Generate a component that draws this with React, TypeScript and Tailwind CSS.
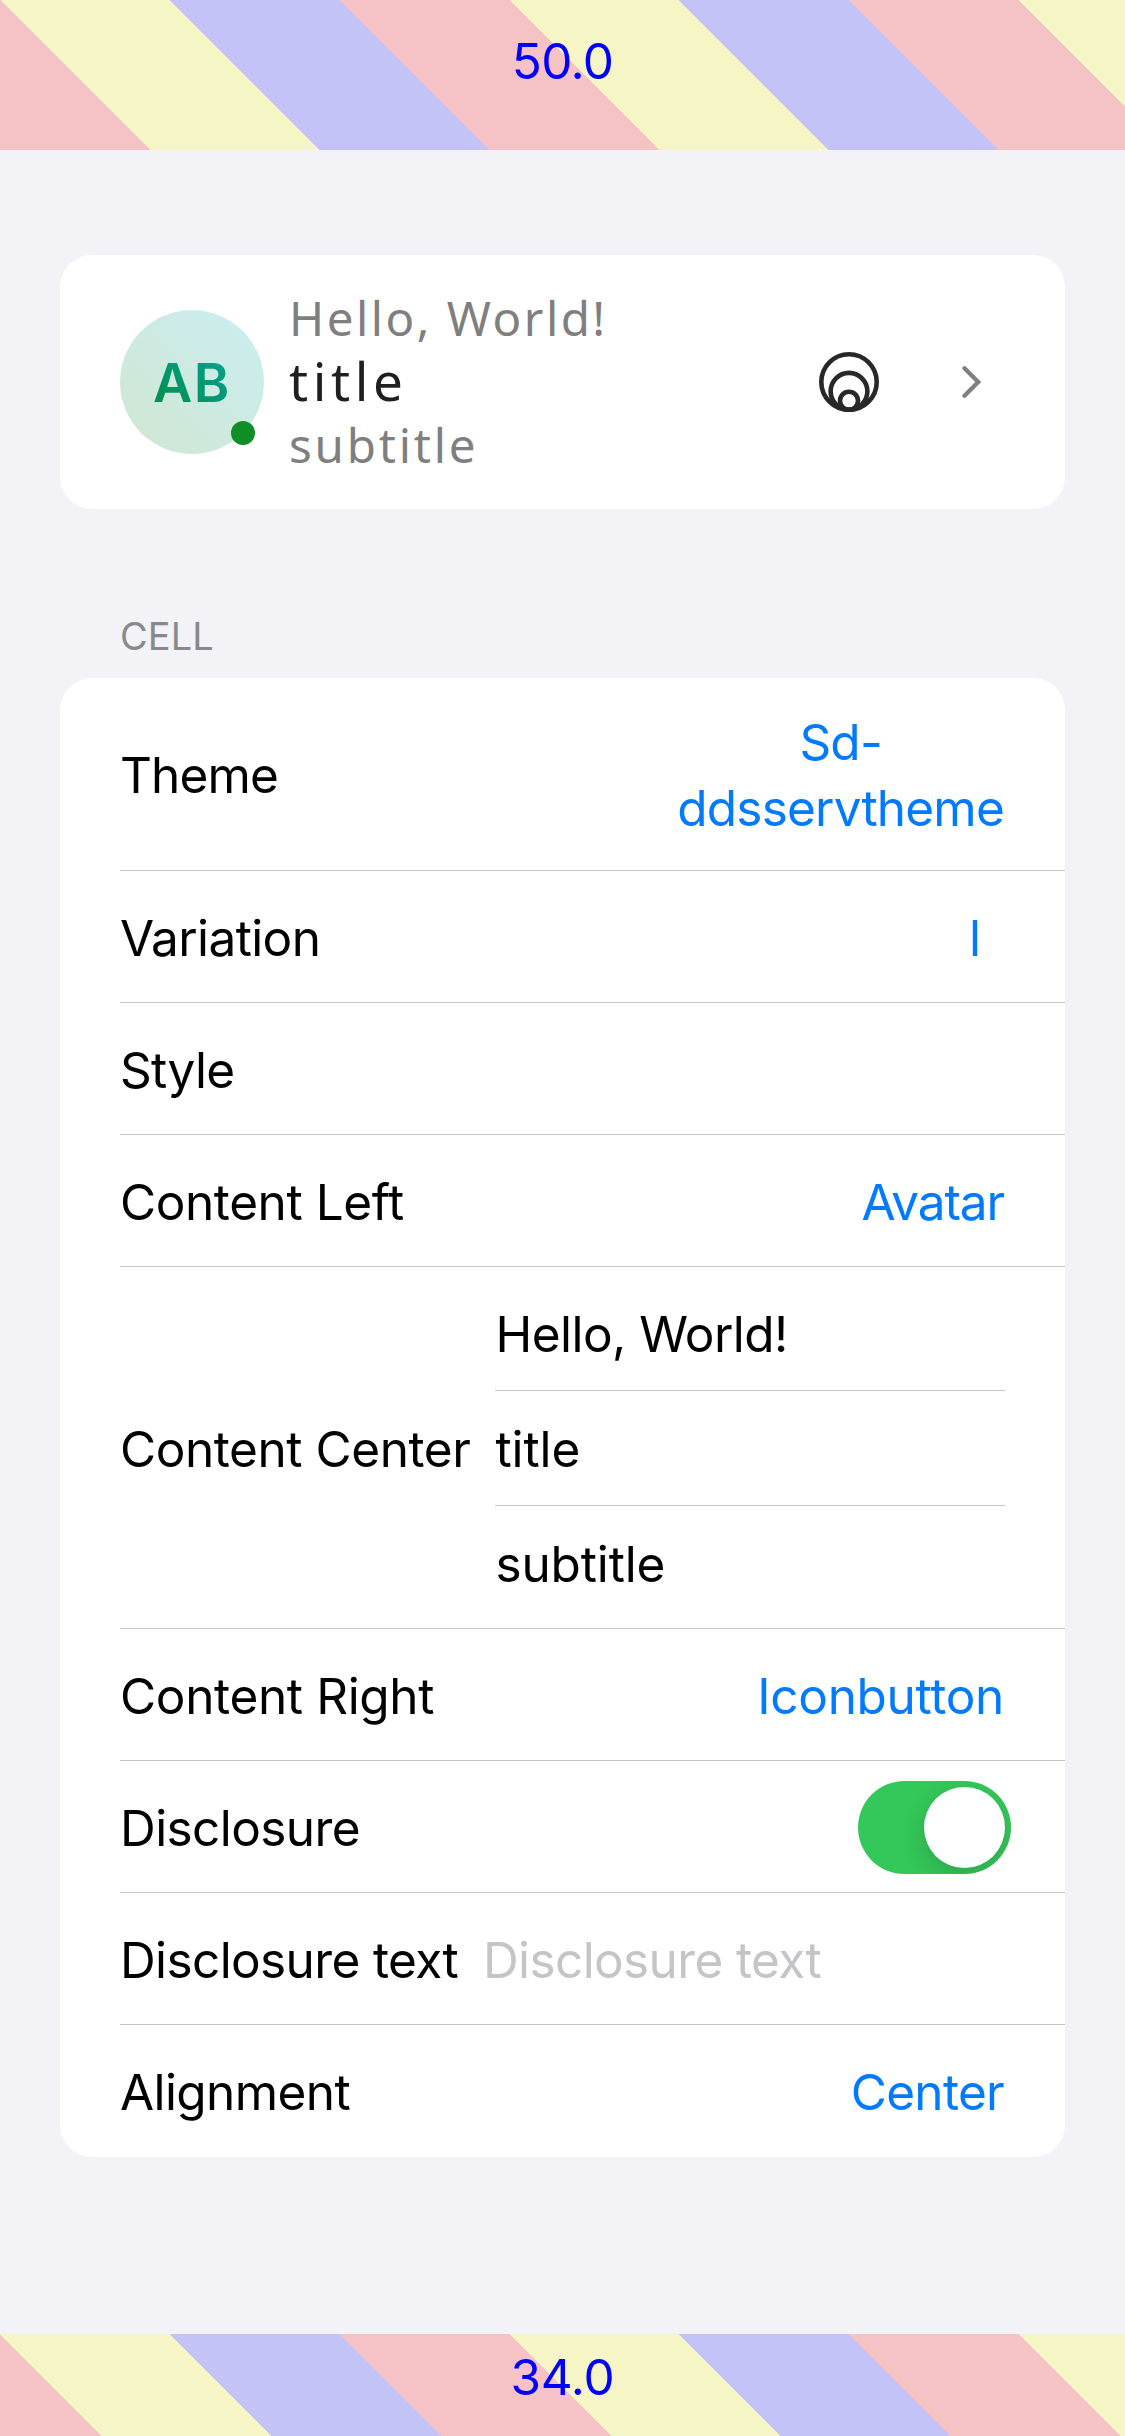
import type { ReactNode } from 'react';

const STRIPES_TOP =
  'bg-[repeating-linear-gradient(45deg,#f5c3c6_-13.93px_106.07px,#f5f5c5_106.07px_226.07px,#c3c3f8_226.07px_346.07px)]';
const STRIPES_BOTTOM =
  'bg-[repeating-linear-gradient(45deg,#f5c3c6_-47.88px_72.12px,#f5f5c5_72.12px_192.12px,#c3c3f8_192.12px_312.12px)]';

function Row({ children, height = 'h-[132px]' }: { children: ReactNode; height?: string }) {
  return <div className={`flex items-center justify-between pt-[2px] pr-[60px] ${height}`}>{children}</div>;
}

function Label({ children, tracking }: { children: ReactNode; tracking: string }) {
  return <span className={`whitespace-nowrap ${tracking}`}>{children}</span>;
}

function Value({ children, tracking }: { children: ReactNode; tracking: string }) {
  return <button className={`pr-px text-center text-[#007aff] ${tracking}`}>{children}</button>;
}

function Field({ children, tracking }: { children: ReactNode; tracking: string }) {
  return <div className={`flex h-[115px] items-center pt-px pl-[0.5px] ${tracking}`}>{children}</div>;
}

function Avatar() {
  return (
    <div className="relative flex size-[144px] shrink-0 items-center justify-center rounded-full bg-linear-to-tr from-[#d0e6d0] to-[#cbeef3]">
      <span className="bg-linear-to-tr from-[#048c45] to-[#04a396] bg-clip-text pt-[2px] text-[54px] leading-[56px] font-semibold tracking-[1.5px] text-transparent">
        AB
      </span>
      <span className="absolute right-[9px] bottom-[9px] size-[24px] rounded-full bg-[#108e26]" />
    </div>
  );
}

function NestedCircles() {
  return (
    <svg className="size-[60px]" viewBox="0 0 60 60" fill="none" stroke="#282828" strokeWidth="4.6">
      <circle cx="30" cy="30" r="27.7" />
      <circle cx="30" cy="39.3" r="18.4" />
      <circle cx="30" cy="48.7" r="9" />
    </svg>
  );
}

function Chevron() {
  return (
    <svg className="h-[36px] w-[20px]" viewBox="0 0 20 36" fill="none" stroke="#808080" strokeWidth="4.3" strokeLinecap="round">
      <path d="M2.5 4.3L16.2 18L2.5 31.7" />
    </svg>
  );
}

function Toggle() {
  return (
    <div className="-mr-[6px] flex h-[93px] w-[153px] items-center justify-end overflow-hidden rounded-full bg-[#34c759] pr-[6px]">
      <div className="size-[81px] rounded-full bg-white shadow-[0_9px_24px_rgba(0,0,0,0.16)]" />
    </div>
  );
}

export default function App() {
  return (
    <div className="flex h-[2436px] w-[1125px] flex-col bg-[#f2f2f7] font-['Inter',sans-serif] text-[49.5px] leading-[66px] text-black">
      <header className={`flex h-[150px] shrink-0 items-center justify-center pb-7 tracking-[-0.7px] text-[#0000ff] ${STRIPES_TOP}`}>
        50.0
      </header>

      <main className="flex flex-1 flex-col px-[60px] pt-[105px]">
        <section className="flex h-[254px] items-center justify-between rounded-[32px] bg-white pr-[83px] pl-[60px]">
          <div className="flex items-center gap-[25px]">
            <Avatar />
            <div className="flex flex-col pb-[3px] font-['Noto_Sans',sans-serif]">
              <span className="text-[47.5px] leading-[61px] tracking-[2.5px] text-[#7f7f7f]">Hello, World!</span>
              <span className="text-[53px] leading-[66px] tracking-[4.6px] text-[#1f1f1f]">title</span>
              <span className="text-[47.5px] leading-[61px] tracking-[2.8px] text-[#7f7f7f]">subtitle</span>
            </div>
          </div>
          <div className="flex items-center gap-[83px]">
            <NestedCircles />
            <Chevron />
          </div>
        </section>

        <h2 className="flex h-[169px] items-center pt-[84px] pl-[60px] text-[37.9px] tracking-[0.1px] text-[#89898d]">CELL</h2>

        <section className="divide-y divide-[#c6c6c8] rounded-[32px] bg-white pl-[60px]">
          <Row height="h-[193px]">
            <Label tracking="tracking-[-0.86px]">Theme</Label>
            <Value tracking="tracking-[-0.79px]">
              Sd-
              <br />
              ddsservtheme
            </Value>
          </Row>
          <Row>
            <Label tracking="tracking-[-0.6px]">Variation</Label>
            <span className="pr-[23px]">
              <Value tracking="tracking-normal">l</Value>
            </span>
          </Row>
          <Row>
            <Label tracking="tracking-[-0.7px]">Style</Label>
          </Row>
          <Row>
            <Label tracking="tracking-[-0.41px]">Content Left</Label>
            <Value tracking="tracking-[-1.1px]">Avatar</Value>
          </Row>
          <Row height="h-[362px]">
            <Label tracking="tracking-[-0.43px]">Content Center</Label>
            <div className="w-[510px] divide-y divide-[#c6c6c8]">
              <Field tracking="tracking-[-0.55px]">Hello, World!</Field>
              <Field tracking="tracking-[-0.1px]">title</Field>
              <Field tracking="tracking-[-0.15px]">subtitle</Field>
            </div>
          </Row>
          <Row>
            <Label tracking="tracking-[-0.35px]">Content Right</Label>
            <Value tracking="tracking-[-0.3px]">Iconbutton</Value>
          </Row>
          <Row>
            <Label tracking="tracking-[-0.59px]">Disclosure</Label>
            <Toggle />
          </Row>
          <Row>
            <Label tracking="tracking-[-0.62px]">Disclosure text</Label>
            <span className="w-[522px] tracking-[-0.62px] text-[#c5c5c7]">Disclosure text</span>
          </Row>
          <Row>
            <Label tracking="tracking-[-0.6px]">Alignment</Label>
            <Value tracking="tracking-[-0.7px]">Center</Value>
          </Row>
        </section>
      </main>

      <footer className={`flex h-[102px] shrink-0 items-center justify-center pb-4 tracking-[-0.3px] text-[#0000ff] ${STRIPES_BOTTOM}`}>
        34.0
      </footer>
    </div>
  );
}
